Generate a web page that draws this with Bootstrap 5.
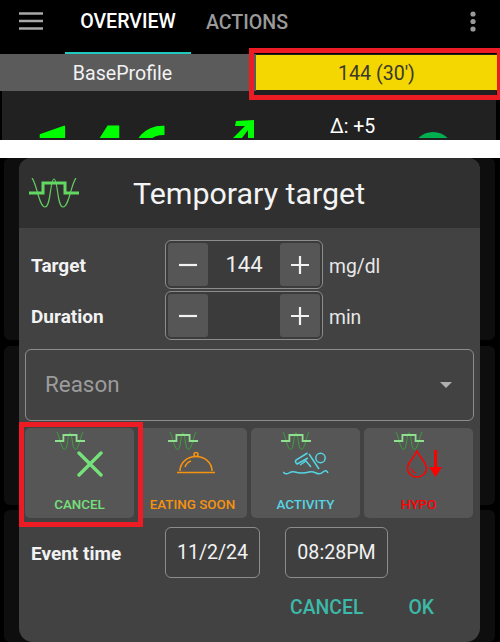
<!DOCTYPE html>
<html lang="en">
<head>
<meta charset="utf-8">
<title>Temporary target</title>
<link href="https://cdn.jsdelivr.net/npm/bootstrap@5.3.0/dist/css/bootstrap.min.css" rel="stylesheet">
<style>
html,body{margin:0;height:642px;overflow:hidden;background:#fff}
body{font-family:Roboto,"Liberation Sans",sans-serif;color:#fff;position:relative}
.app-top{height:140px;background:#000;overflow:hidden;position:relative}
.app-bar{height:54px}
.menu-ico{width:24px;margin-left:19px;margin-bottom:12px}
.tab-one{width:126px;height:54px;margin-left:22px;border-bottom:2px solid #1fc8c0;font-size:19.6px;font-weight:500;color:#fff;padding-bottom:8px}
.tab-two{width:104px;height:54px;font-size:19.6px;font-weight:500;color:#9a9a9a;padding-bottom:8px;margin-left:4px}
.dots{margin-right:24px;margin-bottom:12px}
.prof-row{height:37px;background:#5b5b5b;font-size:19.6px}
.prof-left{width:256px;padding:2px 11px 0 0;color:#f2f2f2}
.prof-right{flex:1;padding:1px 3px 1px 0;background:#222}
.prof-yellow{background:#f4d600;width:100%;height:35px;color:#3a3a2a;padding-top:2px}
.graph-area{height:49px;margin:0 4px 0 2px;background:#212121}
.graph-clip{height:47px;position:relative;overflow:hidden}
.bg-num{position:absolute;left:31px;top:24px;font-size:82px;line-height:82px;font-weight:700;color:#00ff00;letter-spacing:1px}
.bg-arrow{position:absolute;left:230px;top:28px}
.bg-delta{position:absolute;left:328px;top:27px;font-size:19.5px;line-height:18px;color:#fff}
.bg-dot{position:absolute;left:410px;top:41px;width:42px;height:42px;border-radius:50%;background:#00b050}
.gap-strip{height:18px;background:#fff}
.dim-zone{height:484px;background:#000;position:relative;padding:0 5px 0 4px}
.back-card{background:#0e0e0e;border-radius:6px}
.back-one{height:182px;margin-bottom:6px}
.back-two{height:159px;margin-bottom:5px}
.back-three{height:132px}
.tt-modal{position:absolute;left:19px;top:0;width:461px;height:484px;background:#424242;border-radius:12px 12px 14px 14px}
.tt-head{height:70px;background:#303030;border-radius:12px 12px 0 0;padding-left:10px}
.tt-title{font-size:30.4px;margin-left:54px;margin-top:2px;color:#f4f4f4;line-height:34px}
.tt-field{height:51px;padding-left:12px}
.tt-first{margin-top:12px}
.tt-label{width:134px;font-size:19px;font-weight:700;color:#f2f2f2}
.tt-label-spin{margin-top:12px}
.tt-label-ev{padding-top:3px}
.spin-box{width:158px;height:49px;border:1.5px solid #8c8c8c;border-radius:6px;background:#3b3b3b;padding:2px}
.spin-btn{width:40px;height:43px;background:#565656;border-radius:3px;border:0;padding:0}
.spin-val{font-size:22px;color:#efefef;line-height:40px}
.unit{margin-left:6px;margin-top:13px;font-size:19.3px;color:#e8e8e8}
.reason{margin:7px 6px 0 6px;height:72px;border:1.5px solid #8c8c8c;border-radius:6px;padding:0 19px;font-size:22.4px;color:#9c9c9c}
.caret-shape{width:0;height:0;border-left:6px solid transparent;border-right:6px solid transparent;border-top:6px solid #b0b0b0;margin-right:2px}
.preset-row{margin:7px 6px 0 6px;gap:4px;height:90px}
.preset{width:109px;height:90px;background:#565656;border-radius:5px;position:relative;font-size:13.4px;font-weight:500;padding-bottom:3px}
.wave-s{position:absolute;left:30px;top:4px}
.ic-x{margin-bottom:18px;margin-left:20px}
.ic-food{margin-bottom:21px;margin-left:6px}
.ic-swim{margin-bottom:19px}
.ic-drop{margin-bottom:17px;margin-left:12px}
.p-green{color:#76e07a}.p-orange{color:#f7920f}.p-cyan{color:#55d5e3}.p-red{color:#ff0000}
.ev-row{height:51px;margin-top:9px;padding-left:12px}
.ev-box{height:51px;border:1.5px solid #8c8c8c;border-radius:6px;font-size:19.6px;color:#f2f2f2;background:#3f3f3f;padding-top:1px}
.ev-date{width:95px}.ev-time{width:103px;margin-left:25px}
.tt-acts{height:58px;gap:45px;padding:2px 46px 0 0;font-size:19.4px;font-weight:500;color:#3cb9a8}
.red-mark{position:absolute;border:5px solid #ed1c24;pointer-events:none}
.mark-a{left:249px;top:48px;width:251px;height:52px;border-right-width:3px}
.mark-b{left:19px;top:422px;width:124px;height:105px}
</style>
</head>
<body>
<div class="app-top">
  <div class="app-bar d-flex align-items-center">
    <svg class="menu-ico" height="18" viewBox="0 0 24 18"><path d="M0 1.500h24M0 9h24M0 16.500h24" stroke="#a8a8a8" stroke-width="2.400"/></svg>
    <div class="tab-one d-flex align-items-center justify-content-center">OVERVIEW</div>
    <div class="tab-two d-flex align-items-center justify-content-center">ACTIONS</div>
    <svg class="dots ms-auto" width="6" height="21" viewBox="0 0 6 21"><circle cx="3" cy="3" r="2.600" fill="#9a9a9a"/><circle cx="3" cy="10.500" r="2.600" fill="#9a9a9a"/><circle cx="3" cy="18" r="2.600" fill="#9a9a9a"/></svg>
  </div>
  <div class="prof-row d-flex">
    <div class="prof-left d-flex align-items-center justify-content-center">BaseProfile</div>
    <div class="prof-right"><div class="prof-yellow d-flex align-items-center justify-content-center">144 (30')</div></div>
  </div>
  <div class="graph-area">
    <div class="graph-clip">
      <div class="bg-num">146</div>
      <svg class="bg-arrow" width="26" height="24" viewBox="0 0 26 24"><path d="M4 2 22 1V19H16V11L10 19H1L13 7 3 7Z" fill="#00ff00"/></svg>
      <div class="bg-delta">Δ: +5</div>
      <div class="bg-dot"></div>
    </div>
  </div>
  <div class="red-mark mark-a"></div>
</div>
<div class="gap-strip"></div>
<div class="dim-zone">
  <div class="back-card back-one"></div>
  <div class="back-card back-two"></div>
  <div class="back-card back-three"></div>
  <div class="tt-modal">
    <div class="tt-head d-flex align-items-center">
      <svg width="50" height="30" viewBox="0 0 50 30" fill="none"><path d="M3 0C8 6 10 29 16 29S21 1 25 1 28 29 34 29 42 6 47 0" stroke="#62cc62" stroke-width="1.200"/><path d="M0 15H14V5H36V15H50" stroke="#62d862" stroke-width="3"/></svg>
      <div class="tt-title">Temporary target</div>
    </div>
    <div class="tt-field tt-first d-flex align-items-start">
      <div class="tt-label tt-label-spin">Target</div>
      <div class="spin-box d-flex justify-content-between align-items-center">
        <button class="spin-btn" aria-label="minus"><svg width="18" height="18" viewBox="0 0 18 18"><path d="M0 9H18" stroke="#f2f2f2" stroke-width="2.200"/></svg></button>
        <span class="spin-val">144</span>
        <button class="spin-btn" aria-label="plus"><svg width="18" height="18" viewBox="0 0 18 18"><path d="M0 9H18M9 0V18" stroke="#f2f2f2" stroke-width="2.200"/></svg></button>
      </div>
      <span class="unit">mg/dl</span>
    </div>
    <div class="tt-field d-flex align-items-start">
      <div class="tt-label tt-label-spin">Duration</div>
      <div class="spin-box d-flex justify-content-between align-items-center">
        <button class="spin-btn" aria-label="minus"><svg width="18" height="18" viewBox="0 0 18 18"><path d="M0 9H18" stroke="#f2f2f2" stroke-width="2.200"/></svg></button>
        <span class="spin-val"></span>
        <button class="spin-btn" aria-label="plus"><svg width="18" height="18" viewBox="0 0 18 18"><path d="M0 9H18M9 0V18" stroke="#f2f2f2" stroke-width="2.200"/></svg></button>
      </div>
      <span class="unit">min</span>
    </div>
    <div class="reason d-flex align-items-center justify-content-between"><span>Reason</span><span class="caret-shape"></span></div>
    <div class="preset-row d-flex">
      <div class="preset p-green d-flex flex-column align-items-center justify-content-end">
        <svg class="wave-s" width="30" height="18" viewBox="0 0 50 30" fill="none"><path d="M3 0C8 6 10 29 16 29S21 1 25 1 28 29 34 29 42 6 47 0" stroke="#3aa83a" stroke-width="1.500"/><path d="M0 15H14V5H36V15H50" stroke="#8ee08e" stroke-width="3"/></svg>
        <svg class="ic-x" width="26" height="26" viewBox="0 0 26 26"><path d="M2 2 24 24M24 2 2 24" stroke="#76e07a" stroke-width="3.400" stroke-linecap="round"/></svg>
        <span>CANCEL</span>
      </div>
      <div class="preset p-orange d-flex flex-column align-items-center justify-content-end">
        <svg class="wave-s" width="30" height="18" viewBox="0 0 50 30" fill="none"><path d="M3 0C8 6 10 29 16 29S21 1 25 1 28 29 34 29 42 6 47 0" stroke="#3aa83a" stroke-width="1.500"/><path d="M0 15H14V5H36V15H50" stroke="#8ee08e" stroke-width="3"/></svg>
        <svg class="ic-food" width="40" height="22" viewBox="0 0 40 22" fill="none" stroke="#f7920f" stroke-width="1.500"><circle cx="20" cy="2.500" r="2"/><path d="M4 19C4 10 12 4.500 20 4.500S36 10 36 19M1 20.500H39M9 15C10 12 12 10 15 9"/></svg>
        <span>EATING SOON</span>
      </div>
      <div class="preset p-cyan d-flex flex-column align-items-center justify-content-end">
        <svg class="wave-s" width="30" height="18" viewBox="0 0 50 30" fill="none"><path d="M3 0C8 6 10 29 16 29S21 1 25 1 28 29 34 29 42 6 47 0" stroke="#3aa83a" stroke-width="1.500"/><path d="M0 15H14V5H36V15H50" stroke="#8ee08e" stroke-width="3"/></svg>
        <svg class="ic-swim" width="46" height="24" viewBox="0 0 46 24" fill="none" stroke="#55d5e3" stroke-width="1.500"><circle cx="37.500" cy="6" r="4.700"/><path d="M26 2 36 17M24.500 1 13 8Q11.500 10 14 12L25 6M17 13 23 9 28 15"/><path d="M0 20Q3 23 6 21T12 20 19 21 26 20 33 21 40 20 45 21"/></svg>
        <span>ACTIVITY</span>
      </div>
      <div class="preset p-red d-flex flex-column align-items-center justify-content-end">
        <svg class="ic-drop" width="36" height="28" viewBox="0 0 36 28" fill="none"><path d="M10 1C13 8 19.500 12 19.500 18.500A9.500 8.500 0 0 1 .5 18.500C.5 12 7 8 10 1Z" stroke="#f00" stroke-width="1.600"/><path d="M4.500 18C4.500 21 7 23 9 23" stroke="#f00" stroke-width="1.200"/><path d="M28.500 0V18" stroke="#f00" stroke-width="3"/><path d="M22 17H35L28.500 27Z" fill="#f00"/></svg>
        <svg class="wave-s" width="30" height="18" viewBox="0 0 50 30" fill="none"><path d="M3 0C8 6 10 29 16 29S21 1 25 1 28 29 34 29 42 6 47 0" stroke="#3aa83a" stroke-width="1.500"/><path d="M0 15H14V5H36V15H50" stroke="#8ee08e" stroke-width="3"/></svg>
        <span>HYPO</span>
      </div>
    </div>
    <div class="ev-row d-flex align-items-center">
      <div class="tt-label tt-label-ev">Event time</div>
      <div class="ev-box ev-date d-flex align-items-center justify-content-center">11/2/24</div>
      <div class="ev-box ev-time d-flex align-items-center justify-content-center">08:28PM</div>
    </div>
    <div class="tt-acts d-flex align-items-center justify-content-end"><span>CANCEL</span><span>OK</span></div>
  </div>
</div>
<div class="red-mark mark-b"></div>
<script src="https://cdn.jsdelivr.net/npm/bootstrap@5.3.0/dist/js/bootstrap.bundle.min.js"></script>
</body>
</html>
